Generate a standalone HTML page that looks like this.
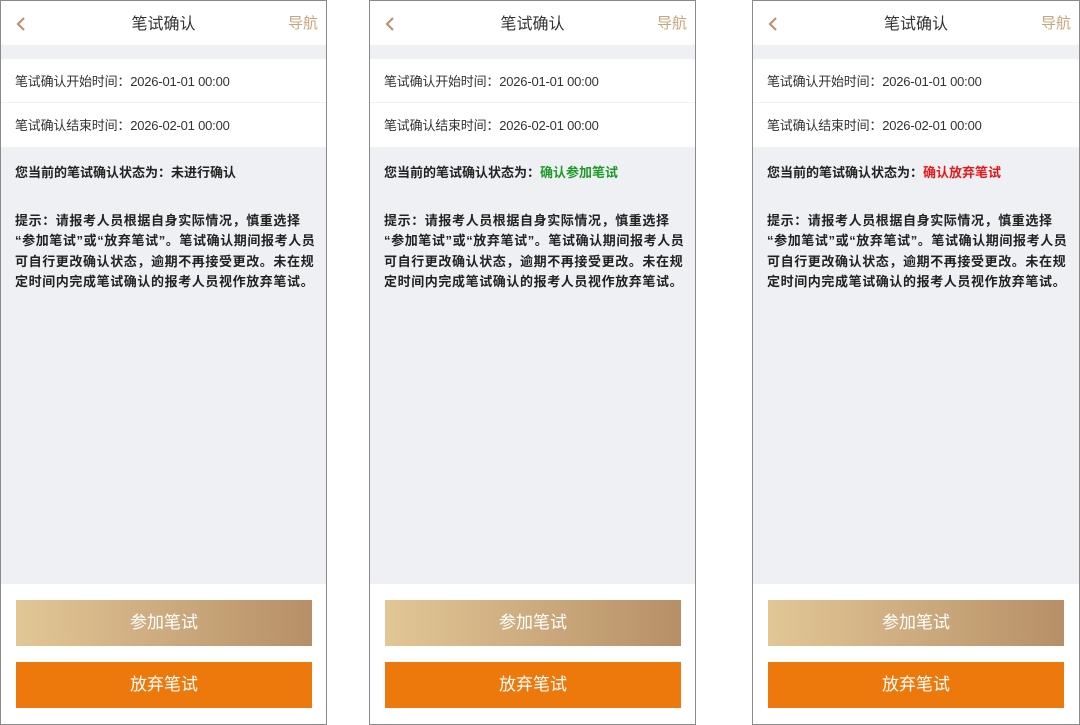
<!DOCTYPE html>
<html><head><meta charset="utf-8"><style>
*{margin:0;padding:0;box-sizing:border-box}
body{width:1080px;height:725px;background:#fff;position:relative;overflow:hidden;font-family:"Liberation Sans","Noto Sans CJK SC",sans-serif;color:#222}
.p{position:absolute;top:0;width:327px;height:725px;border:1px solid #8a8a8a;background:#eef0f3;overflow:hidden}
.hd{position:absolute;left:0;right:0;top:0;height:44px;background:#fff}
.hd .t{position:absolute;left:0;right:0;top:9px;text-align:center;font-size:16px;color:#333}
.hd .n{position:absolute;right:8px;top:11px;font-size:15px;color:#c9a57a}
.hd svg{position:absolute;left:14px;top:15px}
.r{position:absolute;left:0;right:0;height:44px;background:#fff;font-size:13px;color:#333;padding:12px 0 0 14px;letter-spacing:-0.2px}
.r1{top:58px;border-bottom:1px solid #f1f1f1}
.r2{top:102px}
.st{position:absolute;left:14px;top:161px;font-size:13px;font-weight:bold;color:#222}
.tip{position:absolute;left:14px;right:0;top:210px;font-size:13px;font-weight:bold;line-height:20.3px;color:#222;white-space:nowrap;letter-spacing:0.6px}
.ft{position:absolute;left:0;right:0;top:583px;bottom:0;background:#fff}
.b{position:absolute;left:15px;width:296px;height:46px;color:#fff;font-size:17px;text-align:center;line-height:46px}
.b1{top:16px;background:linear-gradient(90deg,#e2c796,#b78f67)}
.b2{top:78px;background:#ed790c}
</style></head><body>

<div class="p" style="left:0">
<div class="hd"><svg width="12" height="16" viewBox="0 0 12 16"><path d="M9 2L3 8l6 6" stroke="#b89570" stroke-width="2.2" fill="none"/></svg><div class="t">笔试确认</div><div class="n">导航</div></div>
<div class="r r1">笔试确认开始时间：2026-01-01 00:00</div>
<div class="r r2">笔试确认结束时间：2026-02-01 00:00</div>
<div class="st">您当前的笔试确认状态为：未进行确认</div>
<div class="tip">提示：请报考人员根据自身实际情况，慎重选择<br>“参加笔试”或“放弃笔试”。笔试确认期间报考人员<br>可自行更改确认状态，逾期不再接受更改。未在规<br>定时间内完成笔试确认的报考人员视作放弃笔试。</div>
<div class="ft"><div class="b b1">参加笔试</div><div class="b b2">放弃笔试</div></div>
</div>

<div class="p" style="left:369px">
<div class="hd"><svg width="12" height="16" viewBox="0 0 12 16"><path d="M9 2L3 8l6 6" stroke="#b89570" stroke-width="2.2" fill="none"/></svg><div class="t">笔试确认</div><div class="n">导航</div></div>
<div class="r r1">笔试确认开始时间：2026-01-01 00:00</div>
<div class="r r2">笔试确认结束时间：2026-02-01 00:00</div>
<div class="st">您当前的笔试确认状态为：<span style="color:#1e9a2a">确认参加笔试</span></div>
<div class="tip">提示：请报考人员根据自身实际情况，慎重选择<br>“参加笔试”或“放弃笔试”。笔试确认期间报考人员<br>可自行更改确认状态，逾期不再接受更改。未在规<br>定时间内完成笔试确认的报考人员视作放弃笔试。</div>
<div class="ft"><div class="b b1">参加笔试</div><div class="b b2">放弃笔试</div></div>
</div>

<div class="p" style="left:752px;width:328px">
<div class="hd"><svg width="12" height="16" viewBox="0 0 12 16"><path d="M9 2L3 8l6 6" stroke="#b89570" stroke-width="2.2" fill="none"/></svg><div class="t">笔试确认</div><div class="n">导航</div></div>
<div class="r r1">笔试确认开始时间：2026-01-01 00:00</div>
<div class="r r2">笔试确认结束时间：2026-02-01 00:00</div>
<div class="st">您当前的笔试确认状态为：<span style="color:#e8161a">确认放弃笔试</span></div>
<div class="tip">提示：请报考人员根据自身实际情况，慎重选择<br>“参加笔试”或“放弃笔试”。笔试确认期间报考人员<br>可自行更改确认状态，逾期不再接受更改。未在规<br>定时间内完成笔试确认的报考人员视作放弃笔试。</div>
<div class="ft"><div class="b b1">参加笔试</div><div class="b b2">放弃笔试</div></div>
</div>

</body></html>
